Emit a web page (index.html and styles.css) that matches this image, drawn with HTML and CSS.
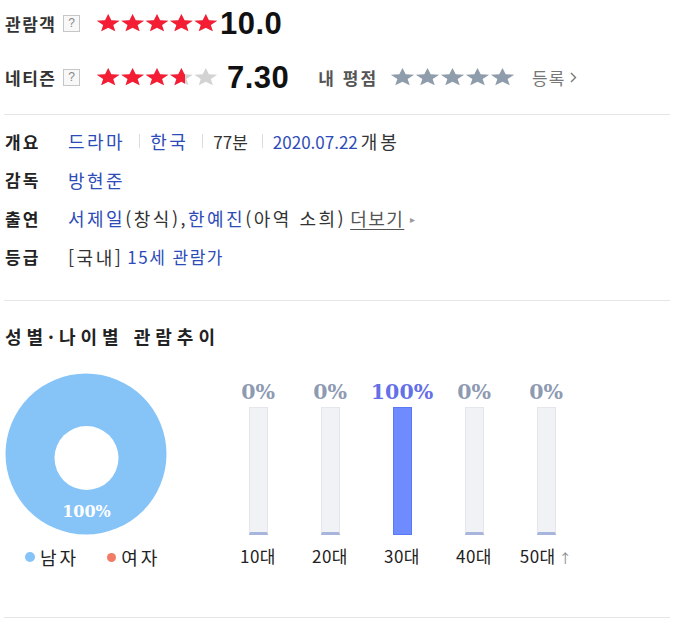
FILE: index.html
```html
<!DOCTYPE html>
<html lang="ko">
<head>
<meta charset="utf-8">
<title>관람객 평점</title>
<link rel="stylesheet" href="styles.css">
</head>
<body>
<svg class="defs" width="0" height="0" aria-hidden="true">
  <defs>
    <symbol id="star" viewBox="0 0 24.4 18">
      <polygon points="12.2,0 15.31,6.18 23.61,6.63 17.22,10.91 19.26,17.37 12.2,13.82 5.14,17.37 7.18,10.91 0.79,6.63 9.09,6.18"/>
    </symbol>
  </defs>
</svg>
<div class="page">
  <div class="score-row r1">
    <span class="label">관람객</span><span class="help">?</span>
    <span class="stars">
      <svg class="star-bg" width="122" height="18" viewBox="0 0 122 18"><use href="#star" x="0" width="24.4" height="18"/><use href="#star" x="24.4" width="24.4" height="18"/><use href="#star" x="48.8" width="24.4" height="18"/><use href="#star" x="73.2" width="24.4" height="18"/><use href="#star" x="97.6" width="24.4" height="18"/></svg>
      <span class="fill" style="width:100%"><svg class="star-red" width="122" height="18" viewBox="0 0 122 18"><use href="#star" x="0" width="24.4" height="18"/><use href="#star" x="24.4" width="24.4" height="18"/><use href="#star" x="48.8" width="24.4" height="18"/><use href="#star" x="73.2" width="24.4" height="18"/><use href="#star" x="97.6" width="24.4" height="18"/></svg></span>
    </span>
    <span class="score s1">10.0</span>
  </div>
  <div class="score-row r2">
    <span class="label">네티즌</span><span class="help">?</span>
    <span class="stars">
      <svg class="star-bg" width="122" height="18" viewBox="0 0 122 18"><use href="#star" x="0" width="24.4" height="18"/><use href="#star" x="24.4" width="24.4" height="18"/><use href="#star" x="48.8" width="24.4" height="18"/><use href="#star" x="73.2" width="24.4" height="18"/><use href="#star" x="97.6" width="24.4" height="18"/></svg>
      <span class="fill" style="width:73%"><svg class="star-red" width="122" height="18" viewBox="0 0 122 18"><use href="#star" x="0" width="24.4" height="18"/><use href="#star" x="24.4" width="24.4" height="18"/><use href="#star" x="48.8" width="24.4" height="18"/><use href="#star" x="73.2" width="24.4" height="18"/><use href="#star" x="97.6" width="24.4" height="18"/></svg></span>
    </span>
    <span class="score s2">7.30</span>
    <span class="my">내 평점</span>
    <span class="stars mine">
      <svg class="star-mine" width="125" height="18" viewBox="0 0 122 18" preserveAspectRatio="none"><use href="#star" x="0" width="24.4" height="18"/><use href="#star" x="24.4" width="24.4" height="18"/><use href="#star" x="48.8" width="24.4" height="18"/><use href="#star" x="73.2" width="24.4" height="18"/><use href="#star" x="97.6" width="24.4" height="18"/></svg>
    </span>
    <a class="reg" href="#">등록<svg width="7" height="11" viewBox="0 0 7 11"><path d="M1 1l4.5 4.5L1 10" fill="none" stroke="#777" stroke-width="1.4"/></svg></a>
  </div>

  <div class="divider d1"></div>

  <div class="info">
    <div class="info-row">
      <span class="info-label">개요</span>
      <span class="val"><span class="link">드라마</span><span class="sep"></span><span class="link">한국</span><span class="sep"></span><span class="plain num">77분</span><span class="sep"></span><span class="link num">2020.07.22</span><span class="plain">개봉</span></span>
    </div>
    <div class="info-row">
      <span class="info-label">감독</span>
      <span class="val"><span class="link">방현준</span></span>
    </div>
    <div class="info-row">
      <span class="info-label">출연</span>
      <span class="val"><span class="link">서제일</span><span class="plain">(창식),</span><span class="link">한예진</span><span class="plain">(아역 소희)</span><a class="more" href="#">더보기</a><span class="tri">▸</span></span>
    </div>
    <div class="info-row">
      <span class="info-label">등급</span>
      <span class="val"><span class="plain">[국내]</span><span class="link num">15세 관람가</span></span>
    </div>
  </div>

  <div class="divider d2"></div>

  <h3 class="title">성별·나이별 관람추이</h3>

  <div class="chart">
    <div class="donut-col">
      <svg class="donut" width="166" height="166" viewBox="0 0 166 166">
        <circle cx="82" cy="82" r="80.5" fill="#86c4f8"/>
        <circle cx="82.5" cy="86" r="32" fill="#fff"/>
        <text x="82.5" y="145" text-anchor="middle" class="donut-label">100%</text>
      </svg>
      <div class="legend">
        <span class="dot male"></span><span class="lg-text">남자</span>
        <span class="dot female"></span><span class="lg-text">여자</span>
      </div>
    </div>
    <div class="bars">
      <div class="col"><span class="pct">0%</span><span class="bar"></span><span class="age">10대</span></div>
      <div class="col"><span class="pct">0%</span><span class="bar"></span><span class="age">20대</span></div>
      <div class="col"><span class="pct hi">100%</span><span class="bar on"></span><span class="age">30대</span></div>
      <div class="col"><span class="pct">0%</span><span class="bar"></span><span class="age">40대</span></div>
      <div class="col"><span class="pct">0%</span><span class="bar"></span><span class="age">50대<span class="up">↑</span></span></div>
    </div>
  </div>

  <div class="divider d3"></div>
</div>
</body>
</html>
```

FILE: styles.css
```css
html, body {
  margin: 0;
  padding: 0;
  background: #fff;
}
body {
  font-family: "Noto Sans CJK KR", "Noto Sans", sans-serif;
  color: #333;
}
.defs {
  display: block;
  width: 0;
  height: 0;
  overflow: hidden;
}
.page {
  width: 666px;
  padding-left: 4px;
}

/* rating rows */
.score-row {
  display: flex;
  align-items: center;
  height: 34px;
}
.r1 { margin-top: 6px; }
.r2 { margin-top: 20px; }
.label {
  width: 56px;
  padding-left: 1px;
  font-size: 17px;
  font-weight: 700;
  letter-spacing: 1.5px;
  color: #333;
  line-height: 1;
  white-space: nowrap;
}
.help {
  width: 15px;
  height: 15px;
  margin-left: 2px;
  border: 1px solid #c6c6c6;
  background: #f8f8f8;
  font: 12px/15px "Liberation Sans", Arial, sans-serif;
  color: #888;
  text-align: center;
}
.stars {
  position: relative;
  display: block;
  width: 122px;
  height: 18px;
  margin-left: 16px;
}
.stars svg { display: block; }
.stars .fill {
  position: absolute;
  left: 0;
  top: 0;
  height: 18px;
  overflow: hidden;
}
.star-bg { fill: #d3d3d3; }
.star-red { fill: #f41d33; }
.star-mine { fill: #8e9cab; }
.stars.mine {
  width: 125px;
  margin-left: 12px;
}
.score {
  font-family: "Liberation Sans", Arial, sans-serif;
  font-weight: 700;
  font-size: 31px;
  letter-spacing: 0.5px;
  color: #111;
  line-height: 1;
}
.s1 { margin-left: 2px; }
.s2 { margin-left: 9px; }
.my {
  margin-left: 29px;
  font-size: 17px;
  font-weight: 700;
  color: #555;
  letter-spacing: 2px;
  white-space: nowrap;
}
.reg {
  display: flex;
  align-items: center;
  gap: 5px;
  margin-left: 17px;
  font-size: 17px;
  color: #777;
  text-decoration: none;
  letter-spacing: 1px;
}

/* dividers */
.divider {
  height: 0;
  border-top: 1px solid #e6e6e6;
}
.d1 { margin-top: 20px; }
.d2 { margin-top: 24px; }
.d3 { margin-top: 50px; }

/* info */
.info { margin-top: 7px; }
.info-row {
  display: flex;
  align-items: center;
  height: 38.5px;
  font-size: 18px;
}
.info-label {
  width: 63px;
  padding-left: 1px;
  font-weight: 700;
  color: #222;
  letter-spacing: 2px;
  font-size: 17px;
}
.val {
  display: flex;
  align-items: center;
  white-space: nowrap;
  letter-spacing: 2.5px;
}
.link { color: #2e4cb8; }
.plain { color: #333; }
.num { letter-spacing: 0; font-size: 17px; }
.num + .plain { margin-left: 3px; letter-spacing: 3px; }
.sep {
  display: block;
  width: 0;
  height: 14px;
  border-left: 1px solid #dcdcdc;
  margin: 0 10px 0 14px;
}
.more {
  margin-left: 4px;
  color: #555;
  text-decoration: underline;
  text-underline-offset: 3px;
  letter-spacing: 1.5px;
}
.tri {
  margin-left: 6px;
  font-size: 10px;
  color: #999;
}
.plain + .link.num { margin-left: 4px; letter-spacing: 1.5px; }

/* title */
.title {
  margin: 25px 0 0;
  padding-left: 1px;
  height: 20px;
  font-size: 18px;
  line-height: 20px;
  font-weight: 700;
  letter-spacing: 5px;
  color: #222;
  white-space: nowrap;
}

/* chart */
.chart {
  display: flex;
  margin-top: 26px;
}
.donut-col { width: 166px; }
.donut { display: block; }
.donut-label {
  font-family: "DejaVu Serif", serif;
  font-weight: 700;
  font-size: 16px;
  fill: #fff;
}
.legend {
  display: flex;
  align-items: center;
  height: 20px;
  margin-top: 9px;
  padding-left: 21px;
}
.dot {
  display: block;
  border-radius: 50%;
}
.dot.male {
  width: 10px;
  height: 10px;
  background: #86c4f8;
}
.dot.female {
  width: 9px;
  height: 9px;
  margin-left: 28px;
  background: #f27b66;
}
.lg-text {
  margin-left: 5px;
  font-size: 18px;
  letter-spacing: 3px;
  color: #222;
}

.bars {
  display: flex;
  margin-left: 52px;
}
.col {
  width: 72px;
  display: flex;
  flex-direction: column;
  align-items: center;
}
.pct {
  margin-top: 10px;
  height: 20px;
  font-family: "DejaVu Serif", serif;
  font-weight: 700;
  font-size: 20.5px;
  line-height: 20px;
  color: #8e9ab2;
  white-space: nowrap;
}
.pct.hi { color: #6470e6; }
.bar {
  display: block;
  box-sizing: border-box;
  width: 19px;
  height: 128px;
  margin-top: 5px;
  background: #f0f2f5;
  border: 1px solid #e3e6ea;
  border-bottom: 3px solid #a8b6de;
}
.bar.on {
  background: #6e8cff;
  border: 1px solid #5b7af2;
}
.age {
  margin-top: 10.5px;
  height: 20px;
  font-size: 17px;
  line-height: 20px;
  color: #222;
  white-space: nowrap;
  letter-spacing: 0.5px;
}
.up {
  margin-left: 3px;
  font-size: 13px;
  color: #888;
}
```
